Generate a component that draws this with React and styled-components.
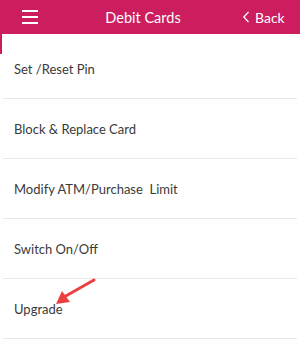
import styled, { createGlobalStyle } from 'styled-components';

const GlobalStyle = createGlobalStyle`
  html, body {
    margin: 0;
    padding: 0;
    background: #ffffff;
  }
  body {
    font-family: Lato, "Open Sans", sans-serif;
  }
`;

const Screen = styled.div`
  position: relative;
  width: 300px;
  height: 342px;
  overflow: hidden;
  background: #ffffff;
`;

const Header = styled.header`
  height: 34px;
  background: #cc1d5e;
  display: grid;
  grid-template-columns: 60px 1fr 80px;
  align-items: center;
  color: #ffffff;
`;

const MenuButton = styled.div`
  display: flex;
  flex-direction: column;
  gap: 4px;
  padding-left: 22px;
`;

const MenuLine = styled.span`
  display: block;
  width: 16px;
  height: 2px;
  background: #ffffff;
`;

const Title = styled.h1`
  margin: 0;
  font-size: 14.5px;
  font-weight: 400;
  text-align: center;
  padding-left: 6px;
`;

const BackButton = styled.div`
  display: flex;
  align-items: center;
  gap: 6px;
  padding-left: 23px;
  font-size: 14px;
`;

const List = styled.ul`
  list-style: none;
  margin: 0;
  padding: 5px 3px 0 3px;
`;

const Accent = styled.div`
  position: absolute;
  left: 0;
  top: 34px;
  width: 2px;
  height: 20px;
  background: #cc1d5e;
`;

const Row = styled.li`
  height: 59px;
  display: flex;
  align-items: center;
  padding-left: 9px;
  border-bottom: 1px solid #e8e8e8;
  font-size: 13px;
  color: #3a3a3a;
  white-space: pre;
`;

const Label = styled.span`
  padding-left: 2px;
`;

const Pointer = styled.svg`
  position: absolute;
  left: 50px;
  top: 275px;
`;

const items = [
  'Set /Reset Pin',
  'Block & Replace Card',
  'Modify ATM/Purchase  Limit',
  'Switch On/Off',
  'Upgrade',
];

export default function App() {
  return (
    <>
      <GlobalStyle />
      <Screen>
        <Header>
          <MenuButton>
            <MenuLine />
            <MenuLine />
            <MenuLine />
          </MenuButton>
          <Title>Debit Cards</Title>
          <BackButton>
            <svg width="6" height="12" viewBox="0 0 6 12">
              <path d="M5.5 1 L0.8 6 L5.5 11" fill="none" stroke="#fff" strokeWidth="1.3" />
            </svg>
            Back
          </BackButton>
        </Header>
        <Accent />
        <List>
          {items.map((item) => (
            <Row key={item}>
              <Label>{item}</Label>
            </Row>
          ))}
        </List>
        {/* red arrow pointing at Upgrade */}
        <Pointer width="50" height="34" viewBox="0 0 50 34">
          <path d="M44 5 L14 22" stroke="#ec4040" strokeWidth="3" strokeLinecap="round" />
          <path d="M6 29 L12 16 L20 27 Z" fill="#ec4040" />
        </Pointer>
      </Screen>
    </>
  );
}
